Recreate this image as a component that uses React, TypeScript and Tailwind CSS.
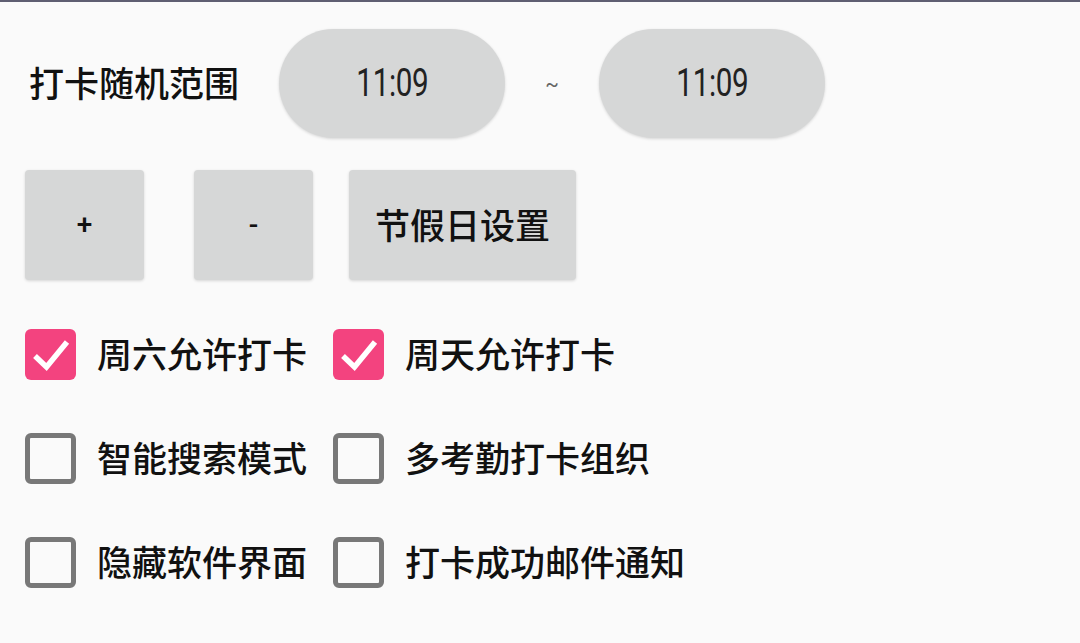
import React from "react";

const cjk = { fontFamily: '"Noto Sans CJK SC", "Noto Sans", sans-serif' };
const num = { fontFamily: 'Roboto, "Noto Sans", sans-serif' };

function Check({ checked, label }: { checked: boolean; label: string }) {
  return (
    <div className="flex items-center h-[51px]">
      {checked ? (
        <div className="w-[51px] h-[51px] rounded-[6px] bg-[#f3437f] flex items-center justify-center shrink-0">
          <svg width="51" height="51" viewBox="0 0 51 51">
            <path d="M10 27 L21.5 38 L42 13" fill="none" stroke="#ffffff" strokeWidth="5.5" strokeLinecap="butt" strokeLinejoin="miter" />
          </svg>
        </div>
      ) : (
        <div className="w-[51px] h-[51px] rounded-[6px] border-[5px] border-[#787878] shrink-0" />
      )}
      <span className="ml-[21px] pb-[4px] text-[35px] font-medium leading-none text-[#111111]" style={cjk}>
        {label}
      </span>
    </div>
  );
}

function Time() {
  return (
    <div className="w-[226px] h-[109px] rounded-full bg-[#d6d7d7] shadow-[0_1px_3px_rgba(0,0,0,0.15)] flex items-center justify-center text-[#222222]" style={num}>
      <span className="inline-block text-[39px] leading-none scale-x-[0.76] tracking-[-0.5px]">11:09</span>
    </div>
  );
}

export default function App() {
  return (
    <div className="w-[1080px] h-[643px] bg-[#fafafa] overflow-hidden">
      <div className="h-[2px] bg-[#5f5e72]" />
      <div className="flex items-center mt-[27px] h-[109px]">
        <div className="w-[279px] pl-[29px] pb-[4px] text-[35px] font-medium leading-none text-[#111111]" style={cjk}>
          打卡随机范围
        </div>
        <Time />
        <div className="w-[94px] flex items-center justify-center text-[20px] text-[#666666]" style={num}>
          ~
        </div>
        <Time />
      </div>
      <div className="flex items-center mt-[32px] h-[110px] pl-[25px]">
        <div className="w-[119px] h-[110px] rounded-[4px] bg-[#d6d7d7] shadow-[0_1px_3px_rgba(0,0,0,0.15)] flex items-center justify-center text-[28px] font-medium text-[#111111]" style={num}>
          +
        </div>
        <div className="ml-[50px] w-[119px] h-[110px] rounded-[4px] bg-[#d6d7d7] shadow-[0_1px_3px_rgba(0,0,0,0.15)] flex items-center justify-center text-[28px] font-medium text-[#111111]" style={num}>
          -
        </div>
        <div className="ml-[36px] w-[227px] h-[110px] rounded-[4px] bg-[#d6d7d7] shadow-[0_1px_3px_rgba(0,0,0,0.15)] flex items-center justify-center" style={cjk}>
          <span className="pb-[4px] text-[35px] font-medium leading-none text-[#111111]">节假日设置</span>
        </div>
      </div>
      <div className="grid grid-cols-[308px_auto] gap-y-[53px] mt-[49px] pl-[25px]">
        <Check checked label="周六允许打卡" />
        <Check checked label="周天允许打卡" />
        <Check checked={false} label="智能搜索模式" />
        <Check checked={false} label="多考勤打卡组织" />
        <Check checked={false} label="隐藏软件界面" />
        <Check checked={false} label="打卡成功邮件通知" />
      </div>
    </div>
  );
}
